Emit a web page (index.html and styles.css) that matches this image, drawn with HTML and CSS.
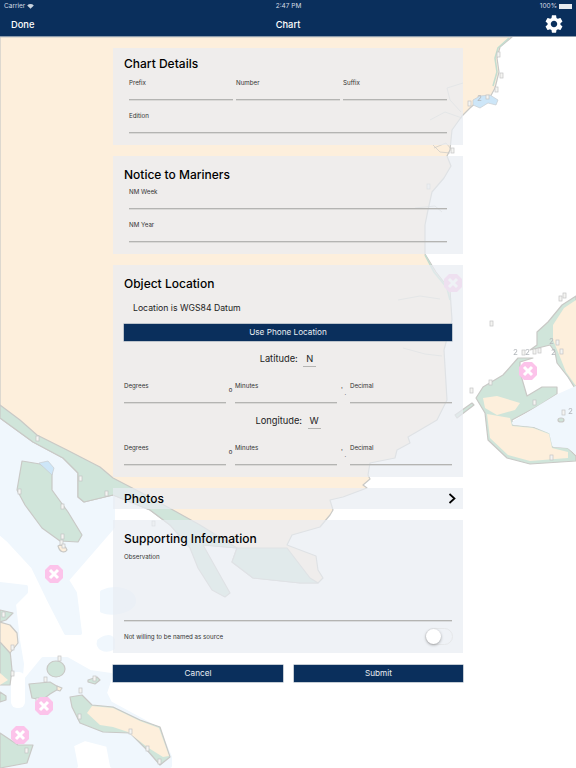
FILE: index.html
```html
<!DOCTYPE html>
<html lang="en">
<head>
    <meta charset="UTF-8">
    <meta name="viewport" content="width=device-width, initial-scale=1.0">
    <title>Chart</title>
    <link rel="stylesheet" href="styles.css">
</head>
<body>
    <!-- Chart drawn behind the form -->
    <svg class="chart" viewBox="0 0 576 768" aria-hidden="true">
        <defs>
            <g id="danger">
                <path d="M-4-9H4L9-4V4L4 9H-4L-9 4V-4Z" fill="#fcc3ea"/>
                <path d="M-4-4L4 4M4-4L-4 4" stroke="#fff" stroke-width="3" fill="none"/>
            </g>
        </defs>

        <!-- shallow water -->
        <path class="water" d="M0 418L113 490V527L67 580 75 593 80 633 66 633 48 598 33 567 8 540 0 533Z"/>
        <path class="water" d="M0 584L26 587 26 592 14 604 18 640 22 664 20 687 43 659 67 659 90 672 111 675 105 693 110 703 158 729 170 757 170 766H112L108 745 85 739 72 745 76 766H0Z"/>
        <path class="water" d="M102 592C115 586 134 590 134 601 134 611 112 615 102 611Z"/>
        <path class="water" d="M99 641C105 636 111 636 113 640V648C105 652 97 648 99 641Z"/>
        <rect x="11" y="672" width="14" height="36" rx="6" fill="#fff"/>

        <!-- mainland -->
        <path class="coast sand" d="M0 37H512L500 47 497 58 499 72 495 88 488 101 478 101 470 108 462 116 452 130 450 150 447 156 451 166 444 178 432 192 428 210 425 225 425 254 436 272 450 290 452 320 444 350 447 400 437 420 420 430 408 437 410 443 397 450 395 458 370 463 368 475 370 479 363 485 367 488 343 497 330 500 333 510 330 515 320 527 292 535 287 545 316 556 318 570 323 578 318 583 300 583 253 578 232 562 237 548 203 545 170 525 150 510 113 495 84 502 78 497 78 473 63 458 33 442 0 418Z"/>
        <path class="coast green" d="M0 405L20 420 37 435 67 450 100 467 113 478 140 492 173 510 200 525 237 548 287 548 310 578 318 583 300 583 253 578 232 562 237 548 203 545 230 593 225 597 212 590 198 568 190 548 170 525 150 510 113 495 84 502 78 497 78 473 63 458 33 442 0 418Z"/>

        <!-- green edge along the coast -->
        <g class="shore">
            <path d="M509 38L498 48 495 58 497 72 493 86"/>
            <path d="M425 255L434 272 447 288 450 300"/>
        </g>

        <!-- rivers inland -->
        <g class="rivers">
            <path d="M463 83L447 88 450 100 461 112"/>
            <path d="M430 120L445 112 462 118"/>
            <path d="M433 145L440 152 450 153"/>
            <path d="M434 148L446 143 452 150"/>
            <path d="M403 348L425 354 442 356"/>
            <path d="M398 300L420 296 440 299"/>
            <path d="M415 208L435 206 442 212"/>
        </g>

        <!-- small lake on the coast -->
        <path class="lake" d="M473 100L480 96 490 95 498 100 496 105 488 103 480 108 473 105Z"/>

        <!-- left islands -->
        <path class="coast green" d="M22 461L40 464 52 472 52 490 68 512 82 535 78 542 60 541 42 528 25 505 17 490Z"/>
        <path class="lake" d="M39 463L48 461 54 468 52 475Z"/>
        <path class="coast sand" d="M58 546C61 544 66 546 67 550 65 553 60 553 58 546Z"/>
        <path class="coast green" d="M0 610L13 613 6 620 0 622Z"/>
        <path class="coast green" d="M0 640L10 650 12 670 10 685 0 685Z"/>
        <path class="coast sand" d="M0 622L10 625 17 633 18 643 10 653 0 642Z"/>
        <path class="sand" d="M0 673L8 680 0 685Z"/>
        <path class="coast green" d="M0 692L6 696 6 700 0 702Z"/>
        <ellipse class="coast green" cx="56" cy="669" rx="9" ry="8"/>
        <path class="coast green" d="M29 684L50 682 60 688 50 694 42 700 32 698Z"/>
        <path class="coast sand" d="M57 686L62 688 60 691 57 690Z"/>
        <path class="coast green" d="M88 680L97 677 100 680 95 684 88 682Z"/>
        <path class="coast green" d="M0 733L18 745 33 745 27 763 0 768Z"/>
        <path class="coast green" d="M70 697L82 695 92 705 113 707 140 720 160 727 170 757 160 765 147 750 130 733 103 732 80 723 72 707Z"/>
        <path class="sand" d="M87 713L92 706 113 708 140 721 159 728 169 756 163 757 147 747 128 732 113 727 100 725Z"/>

        <!-- right land mass -->
        <path class="coast green" d="M576 296L562 305 548 322 537 332 537 345 530 350 550 345 555 352 557 363 568 377 576 390Z"/>
        <path class="sand" d="M576 300L564 308 553 325 553 340 558 352 566 372 576 386Z"/>
        <path class="coast green" d="M476 398L483 387 503 375 518 358 533 358 520 362 520 372 527 396 542 387 557 387 557 394 540 405 512 420 513 425 533 427 550 433 553 447 568 448 576 456V461L530 464 507 458 488 440 485 413Z"/>
        <path class="sand" d="M483 398L497 396 520 403 515 410 497 415 485 408Z"/>
        <path class="sand" d="M487 414L510 418 512 426 533 428 549 434 552 448 568 452 568 458 530 461 508 455 490 438Z"/>
        <path class="water" d="M514 423L540 407 558 396 576 388V452L568 446 554 445 551 432 534 425Z"/>
        <path class="coast green" d="M455 415L472 403 474 405 457 418Z"/>
        <ellipse class="coast green" cx="561" cy="420" rx="3" ry="2"/>

        <!-- sounding markers -->
        <g class="marks">
            <rect x="468" y="101" width="3" height="5"/><rect x="495" y="87" width="3" height="5"/><rect x="500" y="73" width="3" height="5"/><rect x="497" y="52" width="3" height="5"/><rect x="486" y="95" width="3" height="4"/><rect x="451" y="148" width="3" height="5"/><rect x="427" y="184" width="3" height="5"/>
            <rect x="36" y="436" width="3" height="5"/><rect x="79" y="476" width="3" height="5"/><rect x="105" y="491" width="3" height="5"/><rect x="18" y="489" width="3" height="5"/><rect x="61" y="504" width="3" height="5"/><rect x="61" y="534" width="3" height="5"/><rect x="60" y="540" width="3" height="5"/><rect x="62" y="544" width="3" height="4"/><rect x="152" y="521" width="3" height="5"/>
            <rect x="2" y="612" width="3" height="5"/><rect x="11" y="645" width="3" height="5"/><rect x="11" y="671" width="3" height="5"/><rect x="58" y="656" width="3" height="5"/><rect x="36" y="698" width="3" height="5"/><rect x="44" y="677" width="3" height="5"/><rect x="93" y="676" width="3" height="5"/><rect x="79" y="688" width="3" height="5"/><rect x="78" y="714" width="3" height="5"/><rect x="129" y="729" width="3" height="5"/><rect x="146" y="746" width="3" height="5"/><rect x="158" y="759" width="3" height="5"/><rect x="25" y="748" width="3" height="5"/>
            <rect x="490" y="321" width="3" height="5"/><rect x="489" y="380" width="3" height="5"/><rect x="470" y="388" width="3" height="5"/><rect x="533" y="400" width="3" height="5"/><rect x="550" y="455" width="3" height="5"/><rect x="559" y="296" width="3" height="5"/><rect x="563" y="293" width="3" height="5"/><rect x="538" y="348" width="3" height="5"/><rect x="522" y="350" width="3" height="5"/><rect x="533" y="349" width="3" height="5"/><rect x="556" y="340" width="3" height="5"/><rect x="560" y="349" width="3" height="5"/><rect x="562" y="410" width="3" height="5"/>
        </g>

        <!-- depth soundings -->
        <g class="depths">
            <text x="513" y="355">2</text><text x="525" y="355">2</text><text x="549" y="344">2</text><text x="551" y="355">2</text><text x="568" y="414">2</text><text x="477" y="101">2</text>
        </g>

        <use href="#danger" x="453" y="283"/>
        <use href="#danger" x="528" y="371"/>
        <use href="#danger" x="54" y="574"/>
        <use href="#danger" x="44" y="706"/>
        <use href="#danger" x="20" y="735"/>
    </svg>

    <header class="topbar">
        <div class="status">
            <span class="status-left">Carrier
                <svg class="wifi" viewBox="0 0 12 9"><path d="M6 8.6L0 2.6C3.4-.6 8.6-.6 12 2.6Z" fill="#c9d3de"/></svg>
            </span>
            <span class="status-time">2:47 PM</span>
            <span class="status-right">100%<span class="battery"></span></span>
        </div>
        <nav class="navbar">
            <span class="nav-done">Done</span>
            <span class="nav-title">Chart</span>
            <svg class="gear" viewBox="2 2 20 20"><path fill="#fff" d="M19.14 12.94c.04-.3.06-.61.06-.94 0-.32-.02-.64-.07-.94l2.03-1.58c.18-.14.23-.41.12-.61l-1.92-3.32c-.12-.22-.37-.29-.59-.22l-2.39.96c-.5-.38-1.03-.7-1.62-.94l-.36-2.54c-.04-.24-.24-.41-.48-.41h-3.84c-.24 0-.43.17-.47.41l-.36 2.54c-.59.24-1.13.57-1.62.94l-2.39-.96c-.22-.08-.47 0-.59.22L2.74 8.87c-.12.21-.08.47.12.61l2.03 1.58c-.05.3-.09.63-.09.94s.02.64.07.94l-2.03 1.58c-.18.14-.23.41-.12.61l1.92 3.32c.12.22.37.29.59.22l2.39-.96c.5.38 1.03.7 1.62.94l.36 2.54c.05.24.24.41.48.41h3.84c.24 0 .44-.17.47-.41l.36-2.54c.59-.24 1.13-.56 1.62-.94l2.39.96c.22.08.47 0 .59-.22l1.92-3.32c.12-.22.07-.47-.12-.61l-2.01-1.58zM12 15.6c-1.98 0-3.6-1.62-3.6-3.6s1.62-3.6 3.6-3.6 3.6 1.62 3.6 3.6-1.62 3.6-3.6 3.6z"/></svg>
        </nav>
    </header>

    <main class="form">
        <section class="panel chart-details">
            <h2>Chart Details</h2>
            <div class="inset">
                <div class="three-up">
                    <div class="field">Prefix</div>
                    <div class="field">Number</div>
                    <div class="field">Suffix</div>
                </div>
                <div class="field">Edition</div>
            </div>
        </section>

        <section class="panel notice">
            <h2>Notice to Mariners</h2>
            <div class="inset">
                <div class="field">NM Week</div>
                <div class="field">NM Year</div>
            </div>
        </section>

        <section class="panel location">
            <h2>Object Location</h2>
            <p class="datum">Location is WGS84 Datum</p>
            <div class="button wide">Use Phone Location</div>

            <div class="coord-title">Latitude: <span class="hemi">N</span></div>
            <div class="coord-row">
                <div class="field">Degrees</div>
                <span class="unit deg">o</span>
                <div class="field">Minutes</div>
                <span class="unit min">' <i>.</i></span>
                <div class="field">Decimal</div>
            </div>

            <div class="coord-title">Longitude: <span class="hemi">W</span></div>
            <div class="coord-row">
                <div class="field">Degrees</div>
                <span class="unit deg">o</span>
                <div class="field">Minutes</div>
                <span class="unit min">' <i>.</i></span>
                <div class="field">Decimal</div>
            </div>
        </section>

        <section class="panel photos">
            <h2>Photos</h2>
            <svg class="chevron" viewBox="0 0 8 11"><path d="M1.5 1L6.5 5.5 1.5 10" fill="none" stroke="#000" stroke-width="1.7"/></svg>
        </section>

        <section class="panel supporting">
            <h2>Supporting Information</h2>
            <div class="field observation">Observation</div>
            <div class="source-row">
                <span>Not willing to be named as source</span>
                <span class="toggle"><span class="thumb"></span></span>
            </div>
        </section>

        <div class="actions">
            <div class="button">Cancel</div>
            <div class="button">Submit</div>
        </div>
    </main>
</body>
</html>
```

FILE: styles.css
```css
/* General Styling for the Page */
body {
    font-family: Inter, "Liberation Sans", sans-serif;
    margin: 0;
    padding: 0;
    height: 768px;
    overflow: hidden;
    background-color: white;
    position: relative;
    color: #111;
}

/* Chart behind everything */
.chart {
    position: absolute;
    top: 0;
    left: 0;
    width: 576px;
    height: 768px;
    filter: blur(0.5px);
}

.water { fill: #f0f7fd; stroke: #f0f7fd; stroke-width: 4; stroke-linejoin: round; }
.sand { fill: #fdefdc; }
.green { fill: #d0e5da; }
.lake { fill: #cde6f8; stroke: #c8cdd0; stroke-width: 0.7; }
.coast { stroke: #c9c9c6; stroke-width: 1.2; stroke-linejoin: round; }
.shore path { fill: none; stroke: #c3ddd0; stroke-width: 1.6; }
.rivers path { fill: none; stroke: #c9c9c6; stroke-width: 0.7; }
.marks rect { fill: #f4f4f2; stroke: #c4c4c4; stroke-width: 0.7; }
.depths text { font-size: 8px; fill: #b4b8bc; }

/* Top bar */
.topbar {
    position: relative;
    background-color: #0a2f5c;
    color: white;
    height: 36px;
    border-bottom: 1px solid #8c9bab;
}

.status {
    display: flex;
    justify-content: space-between;
    align-items: center;
    height: 12px;
    padding: 0 3px 0 4px;
    font-size: 6.5px;
    color: #d5dce4;
}

.status-left, .status-right {
    flex: 1;
    display: flex;
    align-items: center;
    gap: 2px;
}

.status-right { justify-content: flex-end; }

.wifi { width: 7px; height: 5px; }

.battery {
    width: 13px;
    height: 5px;
    margin-right: 1px;
    background-color: #e6eaef;
    display: inline-block;
}

.navbar {
    display: flex;
    align-items: center;
    justify-content: space-between;
    height: 24px;
    padding: 0 13px 0 11px;
}

.nav-done, .nav-title {
    font-size: 9.3px;
    font-weight: 500;
}

.nav-title {
    position: absolute;
    left: 0;
    right: 0;
    text-align: center;
}

.gear { width: 18px; height: 18px; }

/* Form column */
.form {
    position: relative;
    width: 350px;
    margin: 0 auto;
    padding-top: 11px;
    display: flex;
    flex-direction: column;
    gap: 11px;
}

.panel {
    background-color: rgba(232, 236, 242, 0.7);
    padding: 0 11px;
    box-sizing: border-box;
}

h2 {
    margin: 0;
    font-size: 12px;
    line-height: 14px;
    font-weight: 500;
    color: #000;
}

.inset {
    padding: 0 5px;
    display: flex;
    flex-direction: column;
    gap: 11px;
}

.three-up {
    display: grid;
    grid-template-columns: repeat(3, 1fr);
    gap: 3px;
}

.field {
    height: 22px;
    padding-top: 1px;
    font-size: 6.2px;
    line-height: 8px;
    color: #333;
    border-bottom: 1px solid #b4b4b2;
    box-shadow: 0 1px 0 rgba(180, 180, 178, 0.35);
    box-sizing: border-box;
    min-width: 0;
}

.chart-details { height: 97px; padding-top: 9px; }
.chart-details h2 { margin-bottom: 7px; }

.notice { height: 98px; padding-top: 12px; }
.notice h2 { margin-bottom: 5px; }

.location { height: 212px; padding-top: 12px; }

.datum {
    margin: 11px 0 0 9px;
    font-size: 8.7px;
    line-height: 12px;
    color: #222;
}

.button {
    background-color: #0a2f5c;
    color: #e8edf2;
    height: 17px;
    line-height: 17px;
    font-size: 8.2px;
    text-align: center;
    box-shadow: 0 0 0 0.5px #8c9bab;
}

.wide { margin-top: 10px; }

.coord-title {
    margin-top: 11px;
    height: 14px;
    line-height: 14px;
    font-size: 9.3px;
    text-align: center;
    color: #222;
}

.hemi {
    display: inline-block;
    min-width: 13px;
    margin-left: 3px;
    border-bottom: 1px solid #b4b4b2;
    text-align: center;
    line-height: 14px;
    height: 14px;
    vertical-align: 0;
}

.coord-row {
    margin-top: 15px;
    display: flex;
    height: 22px;
}

.coord-row .field { flex: 0 0 102px; }

.unit {
    font-size: 6px;
    line-height: 8px;
    text-align: center;
    padding-top: 5px;
}

.unit.deg { flex: 0 0 9px; }
.unit.min { flex: 0 0 13px; }

.unit i { font-style: normal; position: relative; top: 3px; }

.photos {
    height: 21px;
    display: flex;
    align-items: center;
    justify-content: space-between;
}

.chevron { width: 8px; height: 11px; margin-right: -4px; }

.supporting { height: 133px; padding-top: 12px; }

.observation {
    height: 69px;
    margin-top: 6px;
}

.source-row {
    display: flex;
    justify-content: space-between;
    align-items: center;
    margin-top: 7px;
    font-size: 6.2px;
    color: #333;
}

.toggle {
    position: relative;
    display: block;
    width: 28px;
    height: 17px;
    border-radius: 9px;
    border: 1px solid #e6e8ea;
    box-sizing: border-box;
    margin-right: -1px;
}

.thumb {
    position: absolute;
    left: 0;
    top: 0;
    width: 15px;
    height: 15px;
    border-radius: 50%;
    background-color: white;
    box-shadow: 0 1px 3px rgba(0, 0, 0, 0.35);
}

.actions {
    display: grid;
    grid-template-columns: 170px 169px;
    justify-content: space-between;
    margin-top: 1px;
}
```
